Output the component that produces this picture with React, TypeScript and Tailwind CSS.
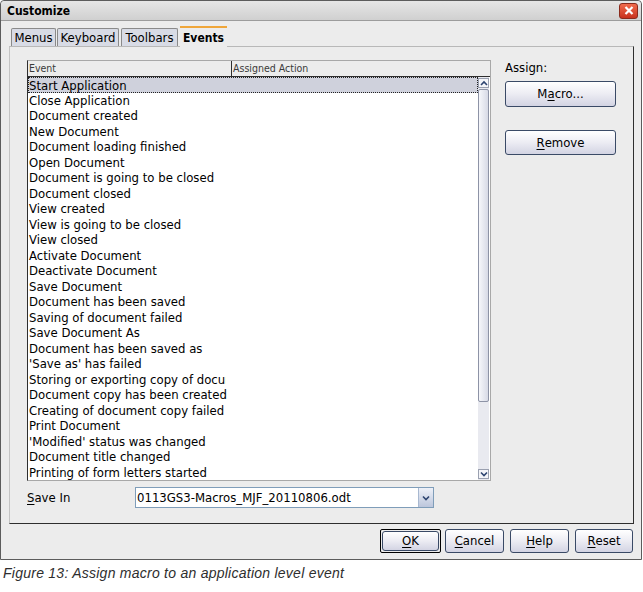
import React from "react";

const events = [
  "Start Application",
  "Close Application",
  "Document created",
  "New Document",
  "Document loading finished",
  "Open Document",
  "Document is going to be closed",
  "Document closed",
  "View created",
  "View is going to be closed",
  "View closed",
  "Activate Document",
  "Deactivate Document",
  "Save Document",
  "Document has been saved",
  "Saving of document failed",
  "Save Document As",
  "Document has been saved as",
  "'Save as' has failed",
  "Storing or exporting copy of document",
  "Document copy has been created",
  "Creating of document copy failed",
  "Print Document",
  "'Modified' status was changed",
  "Document title changed",
  "Printing of form letters started",
];

function U({ children }: { children: React.ReactNode }) {
  return <span className="underline underline-offset-2 decoration-1">{children}</span>;
}

function Chevron({ up = false }: { up?: boolean }) {
  return (
    <svg width="8" height="6" viewBox="0 0 8 6">
      <path
        d={up ? "M1 5 L4 2 L7 5" : "M1 1.5 L4 4.5 L7 1.5"}
        fill="none"
        stroke="#2d4470"
        strokeWidth="1.6"
      />
    </svg>
  );
}

function DlgButton({
  children,
  className = "",
}: {
  children: React.ReactNode;
  className?: string;
}) {
  return (
    <div
      className={`flex items-center justify-center rounded-[3px] border border-[#3a4a66] bg-linear-to-b from-white via-[#ececf3] to-[#d3d4e3] text-[13px] text-black ${className}`}
    >
      {children}
    </div>
  );
}

export default function App() {
  return (
    <div className="w-[643px] h-[592px] bg-white font-['DejaVu_Sans',sans-serif] font-stretch-condensed text-black">
      <div className="w-[642px] h-[560px] flex flex-col border border-[#5c5c5c] rounded-t-[4px] bg-[#ececec]">
        {/* title bar */}
        <div className="h-[20px] flex items-center justify-between pl-[6px] pr-[3px] border-b border-[#9c9c9c] bg-linear-to-b from-[#e6e6e6] to-[#d0d0d0] rounded-t-[4px]">
          <span className="text-[12px] font-bold leading-none">Customize</span>
          <div className="w-[19px] h-[16px] rounded-[3px] border border-[#8a2a1c] bg-linear-to-b from-[#f06a4c] to-[#c8301c] flex items-center justify-center">
            <svg width="10" height="9" viewBox="0 0 10 9">
              <path d="M1.5 1 L8.5 8 M8.5 1 L1.5 8" stroke="white" strokeWidth="2.2" />
            </svg>
          </div>
        </div>

        {/* tabs */}
        <div className="h-[25px] flex items-end pl-[10px] text-[13px]">
          <div className="w-[45px] h-[18px] flex items-center justify-center border border-b-0 border-[#8a8a8a] rounded-t-[2px] bg-[#d8dbe5] leading-none">
            Menus
          </div>
          <div className="w-[62px] h-[18px] ml-[1px] flex items-center justify-center border border-b-0 border-[#8a8a8a] rounded-t-[2px] bg-[#d8dbe5] leading-none">
            Keyboard
          </div>
          <div className="w-[57px] h-[18px] ml-[2px] flex items-center justify-center border border-b-0 border-[#8a8a8a] rounded-t-[2px] bg-[#d8dbe5] leading-none">
            Toolbars
          </div>
          <div className="relative z-10 w-[47px] h-[21px] ml-[2px] -mb-[1px] flex items-center justify-center border-t-2 border-[#efa63a] bg-[#ececec] text-[12px] font-bold leading-none">
            Events
          </div>
        </div>

        {/* panel */}
        <div className="ml-[8px] w-[625px] h-[478px] border border-t-[#b8b8b8] border-l-[#c4c4c4] border-r-[#2e2e2e] border-b-[#2e2e2e] pl-[17px] pt-[13px] flex flex-col">
          <div className="flex">
            {/* list box */}
            <div className="w-[464px] h-[421px] flex flex-col border border-[#a8a8a8] border-l-[#2e2e2e] bg-white overflow-hidden">
              <div className="h-[16px] flex border-b border-[#2e2e2e] bg-[#ececec] text-[10.5px] leading-[15px] text-[#3a3a3a]">
                <div className="w-[204px] pl-[1px] border-r border-[#2e2e2e]">Event</div>
                <div className="pl-[1px]">Assigned Action</div>
              </div>
              <div className="flex flex-1 min-h-0">
                <div className="flex-1 flex flex-col text-[13px]">
                  {events.map((e, i) => (
                    <div
                      key={e}
                      className={`h-[15.5px] leading-[15.5px] flex shrink-0 ${
                        i === 0 ? "bg-[#cfd1dc] border border-dotted border-[#222] leading-[13.5px]" : ""
                      }`}
                    >
                      <div
                        className={`whitespace-nowrap ${
                          e.length > 33 ? "w-[198px] overflow-hidden" : "w-[204px]"
                        } ${i === 0 ? "pl-0" : "pl-[1px]"}`}
                      >
                        {e}
                      </div>
                    </div>
                  ))}
                </div>
                {/* scrollbar */}
                <div className="w-[11px] mr-[1px] flex flex-col bg-[#e9eaf0] pt-[1px] pb-[1px]">
                  <div className="h-[10px] flex items-center justify-center border border-[#9aa0b0] bg-[#f4f5f9]">
                    <Chevron up />
                  </div>
                  <div className="h-[313px] mt-[1px] rounded-[2px] border border-[#8d93a6] bg-linear-to-r from-[#f6f7fb] to-[#d7dae6]" />
                  <div className="flex-1" />
                  <div className="h-[10px] flex items-center justify-center border border-[#9aa0b0] bg-[#f4f5f9]">
                    <Chevron />
                  </div>
                </div>
              </div>
            </div>

            {/* assign column */}
            <div className="ml-[14px] flex flex-col text-[13px]">
              <div className="leading-[16px]">Assign:</div>
              <DlgButton className="w-[111px] h-[26px] mt-[5px]">
                M<U>a</U>cro...
              </DlgButton>
              <DlgButton className="w-[111px] h-[25px] mt-[23px]">
                <U>R</U>emove
              </DlgButton>
            </div>
          </div>

          {/* save in */}
          <div className="mt-[6px] h-[21px] flex items-center text-[13px]">
            <div className="w-[108px]">
              <U>S</U>ave In
            </div>
            <div className="w-[299px] h-[21px] flex border border-[#7f9db9] bg-white">
              <div className="flex-1 pl-[1px] leading-[19px]">0113GS3-Macros_MJF_20110806.odt</div>
              <div className="w-[15px] flex items-center justify-center border-l border-[#a8b8d0] bg-linear-to-b from-[#eef1f8] to-[#bcc6dc]">
                <Chevron />
              </div>
            </div>
          </div>
        </div>

        {/* dialog buttons */}
        <div className="mt-[5px] flex justify-end pr-[8px]">
          <div className="w-[61px] h-[24px] border border-black rounded-[2px] p-[1px] flex">
            <DlgButton className="flex-1 border-[#1e2636]">
              <U>O</U>K
            </DlgButton>
          </div>
          <DlgButton className="w-[59px] h-[24px] ml-[4px]">
            <U>C</U>ancel
          </DlgButton>
          <DlgButton className="w-[59px] h-[24px] ml-[6px]">
            <U>H</U>elp
          </DlgButton>
          <DlgButton className="w-[58px] h-[24px] ml-[6px]">
            <U>R</U>eset
          </DlgButton>
        </div>
      </div>

      <div className="mt-[5px] pl-[3px] font-['Liberation_Sans',Arial,sans-serif] font-stretch-normal italic text-[14px] leading-[17px] tracking-[0.25px] text-[#2e2e2e]">
        Figure 13: Assign macro to an application level event
      </div>
    </div>
  );
}
